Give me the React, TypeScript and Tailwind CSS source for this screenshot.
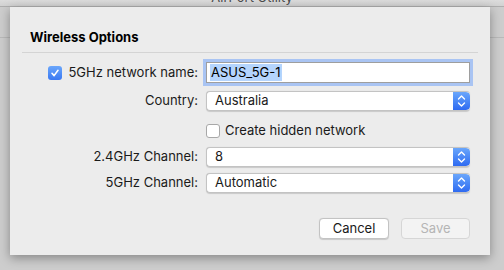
import React from "react";

const font = { fontFamily: "Inter, 'Liberation Sans', Arial, sans-serif" };

function Stepper() {
  return (
    <div className="w-[17px] h-full rounded-r-[4px] bg-gradient-to-b from-[#6aa6fb] to-[#2f6af1] flex items-center justify-center">
      <svg width="9" height="14" viewBox="0 0 9 14" fill="none">
        <path d="M1.5 5 L4.5 2 L7.5 5" stroke="white" strokeWidth="1.4" strokeLinecap="round" strokeLinejoin="round" />
        <path d="M1.5 9 L4.5 12 L7.5 9" stroke="white" strokeWidth="1.4" strokeLinecap="round" strokeLinejoin="round" />
      </svg>
    </div>
  );
}

function Popup({ value }: { value: string }) {
  return (
    <div className="w-[264px] h-[20px] flex rounded-[4px] bg-white border border-[#c3c3c3] border-r-0 shadow-[0_0.5px_1px_rgba(0,0,0,0.15)] overflow-hidden">
      <div className="flex-1 flex items-center pl-[8px] text-[13px] text-[#1a1a1a]">{value}</div>
      <Stepper />
    </div>
  );
}

function Row({ label, children, mt }: { label: React.ReactNode; children: React.ReactNode; mt: string }) {
  return (
    <div className={`flex items-center pl-[20px] ${mt}`}>
      <div className="w-[168px] shrink-0 flex justify-end items-center text-[13px] text-[#1a1a1a] whitespace-nowrap">{label}</div>
      <div className="ml-[8px]">{children}</div>
    </div>
  );
}

export default function App() {
  return (
    <div className="relative w-[504px] h-[270px] overflow-hidden bg-[#cdcdcd]" style={font}>
      <div className="absolute left-0 right-0 top-[37px] h-px bg-[#b9b9b9]" />
      <div className="relative h-[7px] bg-gradient-to-b from-[#dcdcdc] to-[#d2d2d2] border-b border-[#aeaeae] overflow-hidden">
        <div className="absolute left-0 right-0 top-[-12px] text-center text-[13px] text-[#4a4a4a]">AirPort Utility</div>
      </div>
      <div className="relative ml-[10px] w-[480px] h-[248px] bg-[#ececec] shadow-[0_3px_10px_rgba(0,0,0,0.35)] flex flex-col">
        <div className="pl-[20px] pt-[22px] h-[38px] text-[13px] font-bold text-black leading-[16px]">Wireless Options</div>
        <div className="mx-[12px] mt-[7px] h-px bg-[#d4d4d4]" />
        <div className="flex flex-col">
          <Row
            mt="mt-[9px]"
            label={
              <div className="flex items-center w-full">
                <div className="ml-[18px] w-[14px] h-[14px] rounded-[3px] bg-gradient-to-b from-[#6aa6fb] to-[#3a78f2] flex items-center justify-center">
                  <svg width="10" height="10" viewBox="0 0 10 10" fill="none">
                    <path d="M2 5.3 L4.1 7.6 L8 2.3" stroke="white" strokeWidth="1.6" strokeLinecap="round" strokeLinejoin="round" />
                  </svg>
                </div>
                <span className="ml-auto">5GHz network name:</span>
              </div>
            }
          >
            <div className="w-[264px] h-[21px] bg-white border border-[#9e9e9e] shadow-[0_0_0_3px_#a9c4f3] flex items-center pl-[3px] text-[13px] text-black">
              <span className="bg-[#b4d4fd] px-[1px] leading-[17px]">ASUS_5G-1</span>
            </div>
          </Row>
          <Row mt="mt-[8px]" label="Country:">
            <Popup value="Australia" />
          </Row>
          <Row mt="mt-[10px]" label="">
            <div className="flex items-center h-[20px] text-[13px] text-[#1a1a1a]">
              <div className="w-[14px] h-[14px] rounded-[3px] bg-white border border-[#a8a8a8]" />
              <span className="ml-[5px]">Create hidden network</span>
            </div>
          </Row>
          <Row mt="mt-[6px]" label="2.4GHz Channel:">
            <Popup value="8" />
          </Row>
          <Row mt="mt-[6px]" label="5GHz Channel:">
            <Popup value="Automatic" />
          </Row>
        </div>
        <div className="flex justify-end mt-[25px] pr-[20px] gap-[12px]">
          <div className="w-[70px] h-[21px] rounded-[4px] bg-white border border-[#c3c3c3] shadow-[0_0.5px_1px_rgba(0,0,0,0.15)] flex items-center justify-center text-[13px] text-[#1a1a1a]">Cancel</div>
          <div className="w-[69px] h-[21px] rounded-[4px] bg-[#f3f3f3] border border-[#d6d6d6] flex items-center justify-center text-[13px] text-[#b5b5b5]">Save</div>
        </div>
      </div>
    </div>
  );
}
